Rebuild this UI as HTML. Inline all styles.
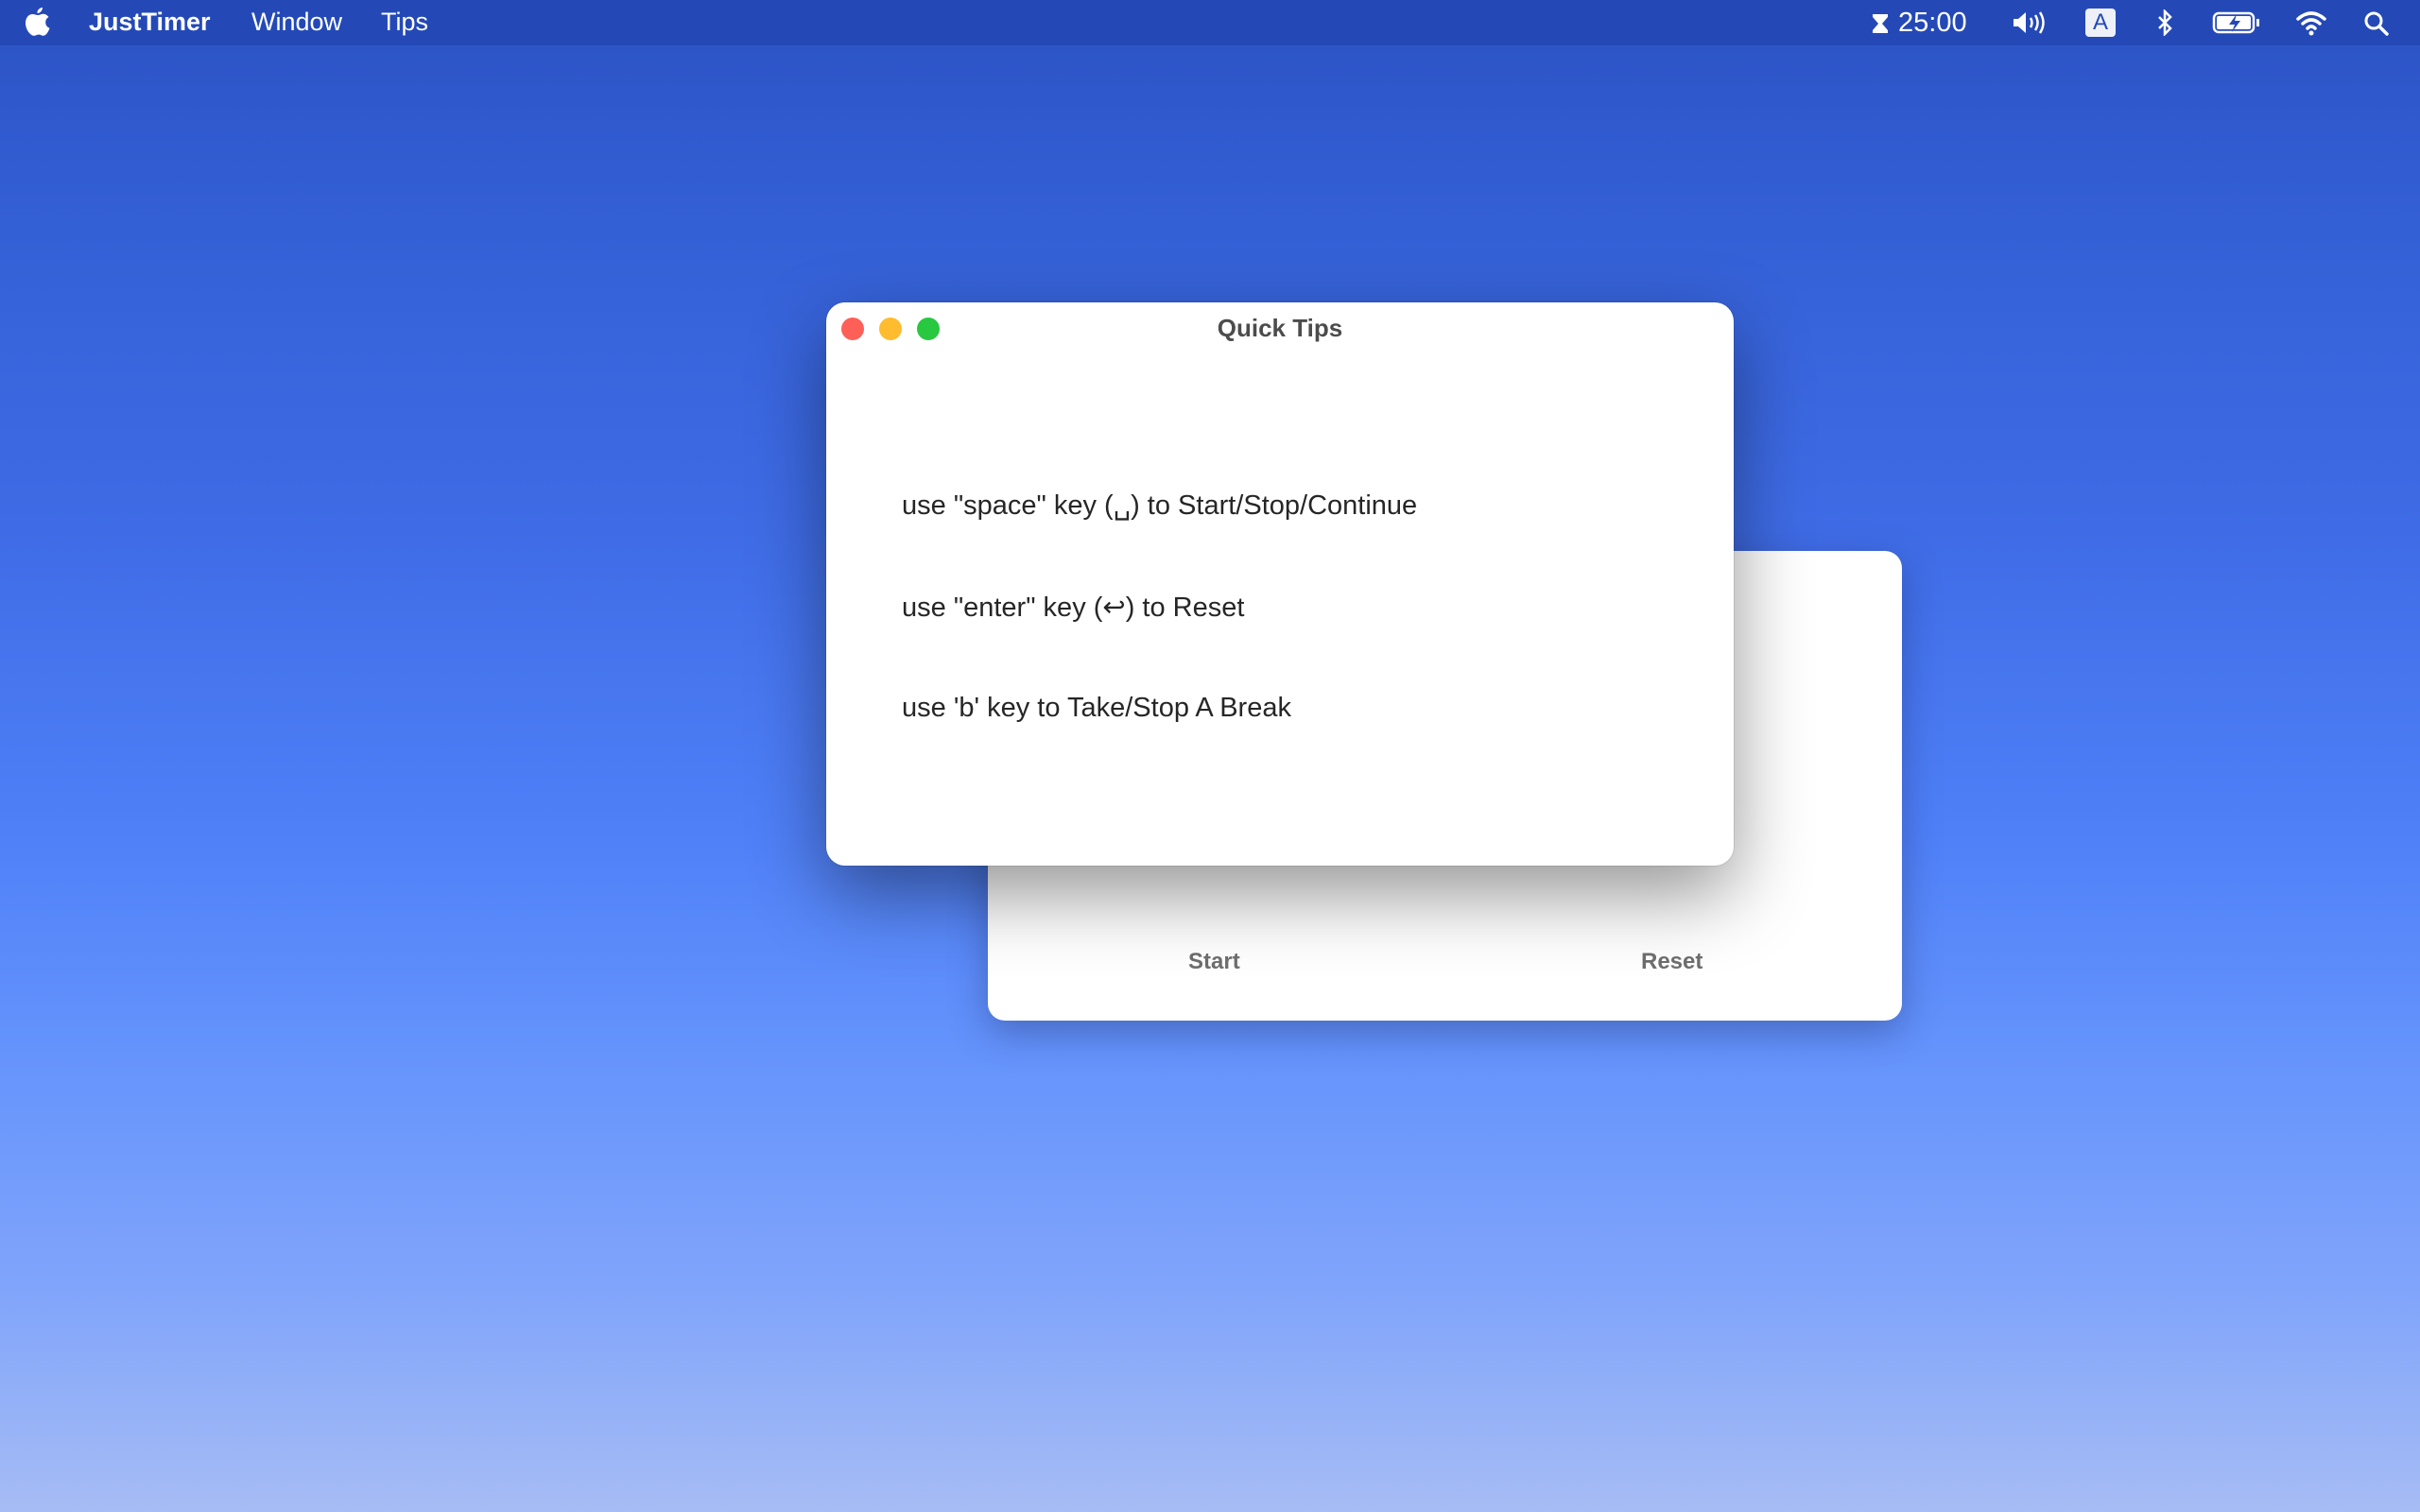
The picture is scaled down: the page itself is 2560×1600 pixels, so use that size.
<!DOCTYPE html>
<html><head><meta charset="utf-8"><style>
*{margin:0;padding:0;box-sizing:border-box}
body{width:2560px;height:1600px;overflow:hidden;position:relative;font-family:"Liberation Sans",sans-serif;
background:linear-gradient(180deg,#2b52c4 0%,#3460d6 15%,#3f6ce6 35%,#4f80f8 55%,#6594fc 70%,#80a4fb 85%,#a6bcf4 100%);}
.menubar{position:absolute;left:0;top:0;width:2560px;height:48px;background:#2449b7;color:#fff;font-size:27px}
.menubar span{position:absolute;top:8px}
.win{position:absolute;background:#fff;border-radius:20px}
.tl{position:absolute;width:24px;height:24px;border-radius:50%;top:336px}
.t{position:absolute;left:80px;font-size:29px;color:#262626;white-space:nowrap}
</style></head><body>
<div class="menubar">
<svg style="position:absolute;left:26px;top:8px" width="28" height="32" viewBox="0 0 28 32"><path fill="#fff" d="M19 0c0 3-2.5 6-5.5 6C13 3 16 0 19 0zM14 8c2 0 3.5-1.3 5.5-1.3 2.5 0 4.5 1.3 6 3.3-5 2.8-4 10 1 11.8-1 3-3.5 8-6.5 8-2 0-2.7-1.2-5-1.2s-3.2 1.2-5 1.2C6 29.8 1 23 1 16.5 1 10.5 4.5 7 8.5 7 10.8 7 12 8 14 8z"/></svg>
<span style="left:94px;font-weight:bold">JustTimer</span>
<span style="left:266px">Window</span>
<span style="left:403px">Tips</span>
<svg style="position:absolute;left:1980px;top:15px" width="18" height="20" viewBox="0 0 18 20"><path fill="#fff" d="M1 0h16v3l-6 7 6 7v3H1v-3l6-7-6-7z"/></svg>
<span style="left:2008px;font-size:29px">25:00</span>
<svg style="position:absolute;left:2128px;top:12px" width="40" height="24" viewBox="0 0 40 24"><path fill="#fff" d="M2 8h5l8-7v22l-8-7H2z"/><path d="M20 7q3 5 0 10M25 4q5 8 0 16M30 1q7 11 0 22" stroke="#fff" stroke-width="2.5" fill="none"/></svg>
<div style="position:absolute;left:2206px;top:9px;width:32px;height:30px;background:#eef0f8;border-radius:4px;color:#2449b7;font-size:24px;text-align:center;line-height:30px">A</div>
<svg style="position:absolute;left:2282px;top:10px" width="16" height="28" viewBox="0 0 16 28"><path d="M2 8l12 12-6 6V2l6 6L2 20" stroke="#fff" stroke-width="2.5" fill="none"/></svg>
<svg style="position:absolute;left:2340px;top:12px" width="52" height="24" viewBox="0 0 52 24"><rect x="2" y="2" width="42" height="20" rx="5" stroke="#fff" stroke-width="2.5" fill="none"/><rect x="5" y="5" width="36" height="14" rx="2" fill="#fff"/><rect x="47" y="8" width="3" height="8" fill="#fff"/><path d="M26 3l-8 11h6l-3 8 9-12h-6z" fill="#2449b7"/></svg>
<svg style="position:absolute;left:2428px;top:10px" width="34" height="28" viewBox="0 0 34 28"><path d="M3 10q14-12 28 0M8 15q9-8 18 0M13 20q4-4 8 0" stroke="#fff" stroke-width="3.5" fill="none" stroke-linecap="round"/><circle cx="17" cy="25" r="2.5" fill="#fff"/></svg>
<svg style="position:absolute;left:2500px;top:11px" width="28" height="28" viewBox="0 0 28 28"><circle cx="11" cy="11" r="8" stroke="#fff" stroke-width="3" fill="none"/><path d="M17 17l8 8" stroke="#fff" stroke-width="3.5" stroke-linecap="round"/></svg>
</div>

<div class="win" style="left:1045px;top:583px;width:967px;height:497px;box-shadow:0 12px 40px rgba(20,30,80,.35);border-radius:18px">
<span style="position:absolute;left:212px;top:421px;font-size:24px;font-weight:bold;color:#6e6e6e;white-space:nowrap">Start</span>
<span style="position:absolute;left:691px;top:421px;font-size:24px;font-weight:bold;color:#6e6e6e;white-space:nowrap">Reset</span>
</div>

<div class="win" style="left:874px;top:320px;width:960px;height:596px;box-shadow:0 30px 80px rgba(0,0,0,.42),0 0 0 1px rgba(0,0,0,.08)">
<div class="tl" style="left:16px;top:16px;background:#fe5f57"></div>
<div class="tl" style="left:56px;top:16px;background:#febc2e"></div>
<div class="tl" style="left:96px;top:16px;background:#28c840"></div>
<div style="position:absolute;left:0;width:100%;top:12px;text-align:center;font-size:26px;font-weight:bold;color:#4c4c4c">Quick Tips</div>
<div class="t" style="top:197px">use "space" key (␣) to Start/Stop/Continue</div>
<div class="t" style="top:305px">use "enter" key (↩) to Reset</div>
<div class="t" style="top:413px">use 'b' key to Take/Stop A Break</div>
</div>
</body></html>
